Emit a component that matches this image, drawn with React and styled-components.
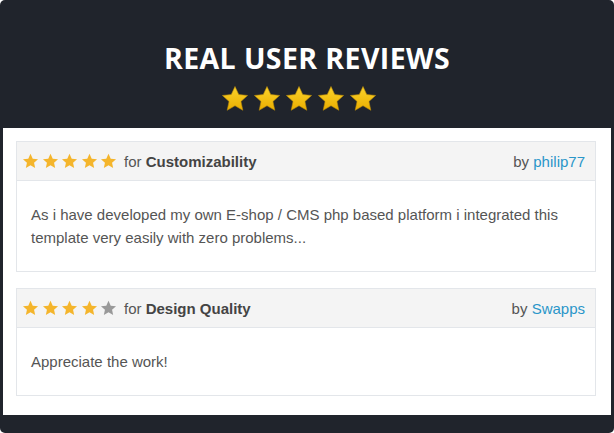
import React from 'react';
import styled, { createGlobalStyle } from 'styled-components';

const reviews = [
  {
    rating: 5,
    topic: 'Customizability',
    author: 'philip77',
    text: 'As i have developed my own E-shop / CMS php based platform i integrated this template very easily with zero problems...',
  },
  {
    rating: 4,
    topic: 'Design Quality',
    author: 'Swapps',
    text: 'Appreciate the work!',
  },
];

const STAR = '12,1.2 15.2,8.1 22.8,8.9 17.1,14 18.7,21.6 12,17.7 5.3,21.6 6.9,14 1.2,8.9 8.8,8.1';

function BigStar() {
  return (
    <svg width="28" height="27" viewBox="0 0 24 23">
      <defs>
        <linearGradient id="gold" x1="0" y1="0" x2="0" y2="1">
          <stop offset="0" stopColor="#fbd32b" />
          <stop offset="1" stopColor="#eaae00" />
        </linearGradient>
      </defs>
      <polygon points={STAR} fill="url(#gold)" stroke="#b98a08" strokeWidth="0.5" strokeLinejoin="round" />
    </svg>
  );
}

function SmallStar({ on }) {
  return (
    <svg width="17" height="16" viewBox="0 0 24 23">
      <polygon points={STAR} fill={on ? '#f4b52c' : '#999999'} />
    </svg>
  );
}

export default function App() {
  return (
    <>
      <Global />
      <Frame>
        <Top>
          <Title>REAL USER REVIEWS</Title>
          <BigStars>
            {[0, 1, 2, 3, 4].map(i => <BigStar key={i} />)}
          </BigStars>
        </Top>
        <Panel>
          {reviews.map(r => (
            <Card key={r.author}>
              <CardHead>
                <Stars>
                  {[1, 2, 3, 4, 5].map(i => <SmallStar key={i} on={i <= r.rating} />)}
                </Stars>
                <For>for <b>{r.topic}</b></For>
                <By>by <a href="#">{r.author}</a></By>
              </CardHead>
              <CardBody>{r.text}</CardBody>
            </Card>
          ))}
        </Panel>
      </Frame>
    </>
  );
}

const Global = createGlobalStyle`
  body {
    margin: 0;
    background: #ffffff;
    font-family: "Liberation Sans", Arial, sans-serif;
  }
`;

const Frame = styled.div`
  width: 614px;
  height: 433px;
  box-sizing: border-box;
  background: #20242c;
  border-radius: 5px;
  padding: 0 3px 18px 3px;
  display: flex;
  flex-direction: column;
`;

const Top = styled.div`
  height: 128px;
  display: flex;
  flex-direction: column;
  align-items: center;
  padding-top: 40px;
  box-sizing: border-box;
`;

const Title = styled.h1`
  margin: 0;
  font-family: "Open Sans", "Noto Sans", sans-serif;
  font-weight: 700;
  font-size: 28.5px;
  line-height: 36px;
  color: #ffffff;
  letter-spacing: 0.4px;
`;

const BigStars = styled.div`
  display: flex;
  gap: 4px;
  margin-top: 9px;
  margin-right: 17px;
`;

const Panel = styled.div`
  flex: 1;
  background: #ffffff;
  padding: 13px 15px 0 13px;
  display: flex;
  flex-direction: column;
  gap: 16px;
`;

const Card = styled.div`
  border: 1px solid #e3e6ea;
`;

const CardHead = styled.div`
  height: 38px;
  background: #f4f4f4;
  border-bottom: 1px solid #e3e6ea;
  display: flex;
  align-items: center;
  padding: 0 10px 0 5px;
  font-size: 15px;
  color: #555555;
`;

const Stars = styled.div`
  display: flex;
  gap: 2.5px;
  margin-right: 7px;
`;

const For = styled.span`
  b {
    color: #444444;
  }
`;

const By = styled.span`
  margin-left: auto;
  a {
    color: #2a96c9;
    text-decoration: none;
  }
`;

const CardBody = styled.div`
  padding: 22px 15px 22px 14px;
  font-size: 15px;
  line-height: 23px;
  color: #555555;
`;
